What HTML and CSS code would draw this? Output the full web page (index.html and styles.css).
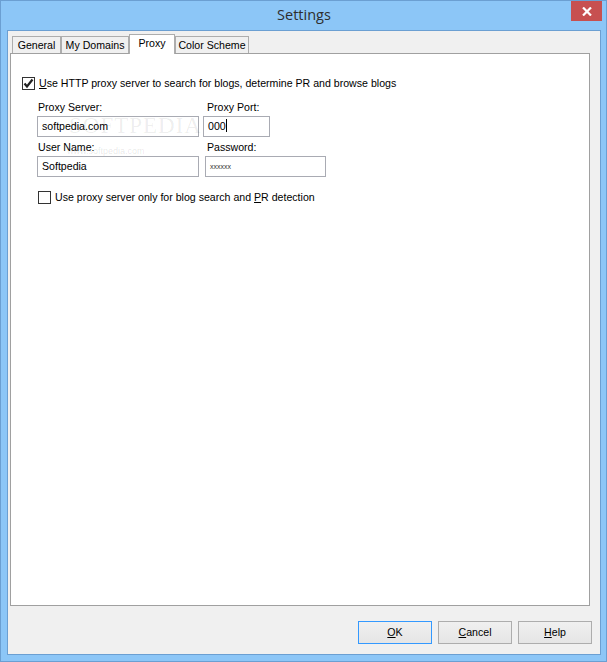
FILE: index.html
```html
<!DOCTYPE html>
<html>
<head>
<meta charset="utf-8">
<link rel="stylesheet" href="styles.css">
</head>
<body>
<div class="window">
  <div class="titlebar">
    <div class="title">Settings</div>
    <div class="close">
      <svg width="10" height="9" viewBox="0 0 10 9"><path d="M1 0.5 L9 8.5 M9 0.5 L1 8.5" stroke="#fff" stroke-width="2.2" fill="none"/></svg>
    </div>
  </div>
  <div class="client">
    <div class="tabs">
      <div class="tab t-general">General</div>
      <div class="tab t-domains">My Domains</div>
      <div class="tab t-proxy active">Proxy</div>
      <div class="tab t-color">Color Scheme</div>
    </div>
    <div class="panel">
      <div class="check-row">
        <span class="checkbox">
          <svg width="11" height="11" viewBox="0 0 11 11"><path d="M1.5 5.5 L4 8.5 L9.5 1.5" stroke="#222" stroke-width="2.2" fill="none"/></svg>
        </span>
        <span class="label"><u>U</u>se HTTP proxy server to search for blogs, determine PR and browse blogs</span>
      </div>
      <div class="fields">
        <div class="field f-server">
          <div class="flabel">Proxy Server:</div>
          <div class="input i-server">softpedia.com</div>
        </div>
        <div class="field f-port">
          <div class="flabel">Proxy Port:</div>
          <div class="input i-port">000<span class="caret"></span></div>
        </div>
        <div class="field f-user">
          <div class="flabel">User Name:</div>
          <div class="input i-user">Softpedia</div>
        </div>
        <div class="field f-pass">
          <div class="flabel">Password:</div>
          <div class="input i-pass"><span class="stars">xxxxxx</span></div>
        </div>
      </div>
      <div class="check-row row2">
        <span class="checkbox"></span>
        <span class="label">Use proxy server only for blog search and <u>P</u>R detection</span>
      </div>
      <div class="wm-big">SOFTPEDIA</div>
      <div class="wm-small">www.softpedia.com</div>
    </div>
    <div class="buttons">
      <div class="btn default"><u>O</u>K</div>
      <div class="btn"><u>C</u>ancel</div>
      <div class="btn"><u>H</u>elp</div>
    </div>
  </div>
</div>
</body>
</html>
```
FILE: styles.css
```css
html, body {
  margin: 0;
  padding: 0;
}
body {
  width: 607px;
  height: 662px;
  overflow: hidden;
  font-family: "Liberation Sans", Arial, sans-serif;
  font-size: 10.6px;
  color: #000;
}
.window {
  width: 607px;
  height: 662px;
  box-sizing: border-box;
  border: 1px solid #6b9fd2;
  background: #8cc6f7;
  padding: 0 5px 6px 6px;
  display: flex;
  flex-direction: column;
}
.titlebar {
  height: 29px;
  position: relative;
  display: flex;
  justify-content: center;
  align-items: center;
}
.title {
  font-family: "Open Sans", "Noto Sans", sans-serif;
  font-size: 14.5px;
  color: #2e2e2e;
  margin-top: -3px;
}
.close {
  position: absolute;
  right: -1px;
  top: 0;
  width: 31px;
  height: 20px;
  background: #c75050;
  display: flex;
  align-items: center;
  justify-content: center;
}
.client {
  flex: 1;
  border: 1px solid #6b9fd2;
  background: #f0f0f0;
  display: flex;
  flex-direction: column;
  padding: 3px 10px 10px 2px;
}
.tabs {
  display: flex;
  align-items: flex-end;
  height: 19px;
  padding-left: 2px;
  position: relative;
  z-index: 2;
}
.tab {
  box-sizing: border-box;
  height: 17px;
  border: 1px solid #adadad;
  border-bottom: none;
  background: #f0f0f0;
  text-align: center;
  line-height: 16px;
  color: #000;
}
.t-general { width: 49px; }
.t-domains { width: 68px; }
.t-proxy { width: 46px; }
.t-color { width: 74px; }
.tab.active {
  height: 20px;
  margin-bottom: -1px;
  background: #fff;
  border-color: #adadad;
  line-height: 17px;
}
.panel {
  position: relative;
  height: 553px;
  box-sizing: border-box;
  border: 1px solid #a0a0a0;
  background: #fff;
  padding: 22px 0 0 11px;
}
.check-row {
  display: flex;
  align-items: center;
  height: 14px;
}
.checkbox {
  box-sizing: border-box;
  width: 13px;
  height: 13px;
  border: 1px solid #333;
  background: #fff;
  display: flex;
  align-items: center;
  justify-content: center;
  margin-right: 4px;
}
.label {
  white-space: nowrap;
}
.fields {
  display: grid;
  grid-template-columns: 168px 130px;
  margin: 9px 0 0 16px;
  row-gap: 2px;
}
.flabel {
  height: 16px;
  line-height: 16px;
  margin-bottom: 1px;
}
.f-port .flabel, .f-pass .flabel {
  padding-left: 1px;
}
.input {
  box-sizing: border-box;
  height: 21px;
  border: 1px solid #a9abb3;
  background: #fff;
  line-height: 19px;
  padding-left: 4px;
  white-space: nowrap;
}
.i-server, .i-user { width: 162px; margin-left: -1px; }
.i-port { width: 67px; margin-left: -3px; }
.i-pass { width: 121px; margin-left: -1px; }
.caret {
  display: inline-block;
  width: 1px;
  height: 13px;
  background: #000;
  vertical-align: -2px;
}
.stars {
  font-size: 7px;
  vertical-align: 3px;
  color: #333;
}
.row2 {
  margin: 13px 0 0 16px;
}
.wm-big {
  position: absolute;
  left: 58px;
  top: 59px;
  font-family: "Liberation Serif", serif;
  font-size: 23px;
  letter-spacing: 1px;
  color: rgba(0,0,0,0.08);
  pointer-events: none;
}
.wm-small {
  position: absolute;
  left: 56px;
  top: 92px;
  font-size: 9px;
  color: rgba(0,0,0,0.1);
  pointer-events: none;
}
.buttons {
  display: flex;
  justify-content: flex-end;
  gap: 6px;
  margin-top: 15px;
  margin-right: -2px;
}
.btn {
  box-sizing: border-box;
  width: 74px;
  height: 23px;
  border: 1px solid #adadad;
  background: linear-gradient(#f0f0f0, #e5e5e5);
  text-align: center;
  line-height: 21px;
}
.btn.default {
  border-color: #3399ff;
}
```
